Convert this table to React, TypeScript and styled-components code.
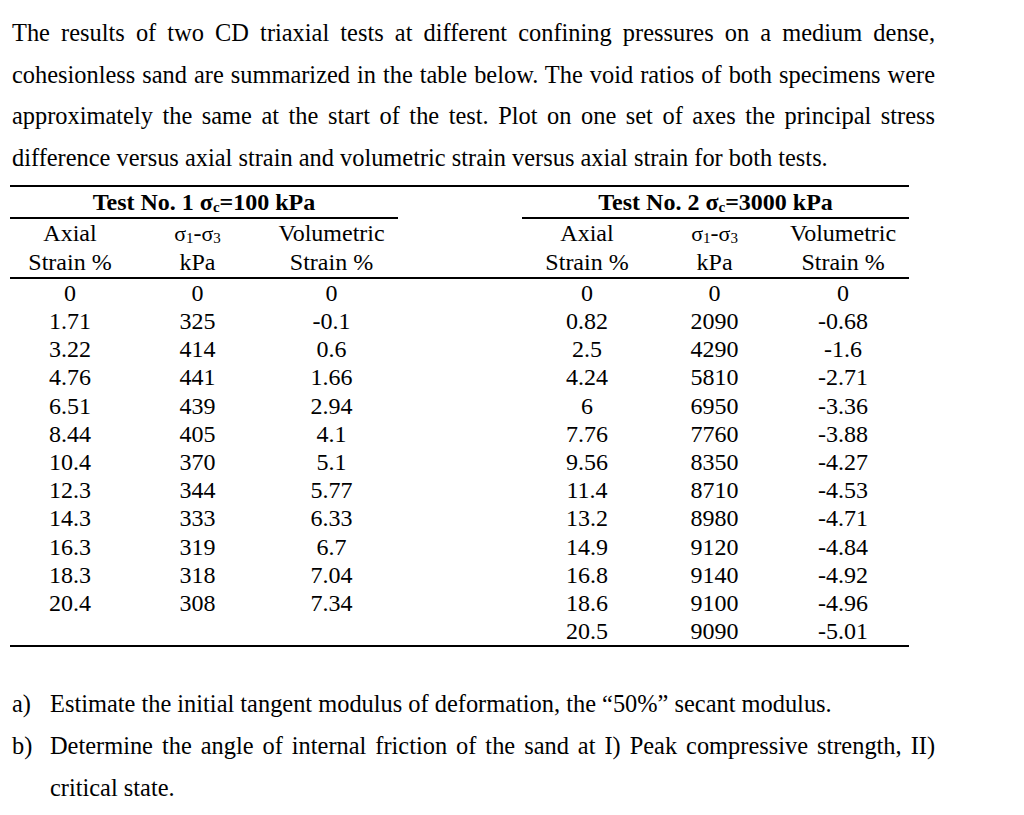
import React from "react";
import styled, { createGlobalStyle } from "styled-components";

const Global = createGlobalStyle`
  html, body { margin: 0; padding: 0; background: #fff; }
  body { font-family: "Liberation Serif", "Times New Roman", serif; color: #000; }
`;

const Page = styled.div`
  width: 1024px;
  height: 815px;
  box-sizing: border-box;
  padding: 12px 89px 0 12px;
  overflow: hidden;
`;

const Para = styled.p`
  margin: 0;
  font-size: 24.4px;
  line-height: 41.7px;
  text-align: justify;
`;

const Table = styled.table`
  border-collapse: collapse;
  table-layout: fixed;
  width: 899px;
  margin: 6px 0 0 -2px;
  font-size: 24px;
  border-top: 2px solid #000;
  border-bottom: 2px solid #000;
`;

const TitleCell = styled.th<{ $line?: boolean }>`
  font-weight: bold;
  text-align: center;
  height: 30px;
  padding: 0;
  line-height: 30px;
  border-bottom: ${(p) => (p.$line ? "2px solid #000" : "none")};
`;

const HeadRow = styled.tr`
  border-bottom: 2px solid #000;
`;

const HeadCell = styled.th`
  font-weight: normal;
  text-align: center;
  padding: 0;
  line-height: 29px;
`;

const Cell = styled.td`
  text-align: center;
  padding: 0;
  height: 28.2px;
  line-height: 28px;
`;

const Sig = styled.span`
  font-size: 22px;
`;

const Sub = styled.sub`
  font-size: 15px;
  vertical-align: -2px;
  line-height: 0;
`;

const List = styled.div`
  margin-top: 36px;
  font-size: 24.4px;
  line-height: 41.7px;
`;

const Item = styled.div`
  display: flex;
`;

const Label = styled.span`
  flex: 0 0 38px;
`;

const ItemText = styled.span`
  flex: 1;
  text-align: justify;
`;

const t1 = [
  ["0", "0", "0"],
  ["1.71", "325", "-0.1"],
  ["3.22", "414", "0.6"],
  ["4.76", "441", "1.66"],
  ["6.51", "439", "2.94"],
  ["8.44", "405", "4.1"],
  ["10.4", "370", "5.1"],
  ["12.3", "344", "5.77"],
  ["14.3", "333", "6.33"],
  ["16.3", "319", "6.7"],
  ["18.3", "318", "7.04"],
  ["20.4", "308", "7.34"],
];

const t2 = [
  ["0", "0", "0"],
  ["0.82", "2090", "-0.68"],
  ["2.5", "4290", "-1.6"],
  ["4.24", "5810", "-2.71"],
  ["6", "6950", "-3.36"],
  ["7.76", "7760", "-3.88"],
  ["9.56", "8350", "-4.27"],
  ["11.4", "8710", "-4.53"],
  ["13.2", "8980", "-4.71"],
  ["14.9", "9120", "-4.84"],
  ["16.8", "9140", "-4.92"],
  ["18.6", "9100", "-4.96"],
  ["20.5", "9090", "-5.01"],
];

const widths = [120, 135, 133, 124, 130, 125, 132];

const SigHead = () => (
  <>
    <Sig>σ</Sig>
    <Sub>1</Sub>-<Sig>σ</Sig>
    <Sub>3</Sub>
  </>
);

export default function App() {
  return (
    <>
      <Global />
      <Page>
        <Para>
          The results of two CD triaxial tests at different confining pressures on a medium dense,
          cohesionless sand are summarized in the table below. The void ratios of both specimens were
          approximately the same at the start of the test. Plot on one set of axes the principal stress
          difference versus axial strain and volumetric strain versus axial strain for both tests.
        </Para>
        <Table>
          <colgroup>
            {widths.map((w, i) => (
              <col key={i} style={{ width: w }} />
            ))}
          </colgroup>
          <thead>
            <tr>
              <TitleCell colSpan={3} $line>
                Test No. 1 σ<Sub>c</Sub>=100 kPa
              </TitleCell>
              <TitleCell />
              <TitleCell colSpan={3} $line>
                Test No. 2 σ<Sub>c</Sub>=3000 kPa
              </TitleCell>
            </tr>
            <HeadRow>
              <HeadCell>Axial<br />Strain %</HeadCell>
              <HeadCell><SigHead /><br />kPa</HeadCell>
              <HeadCell>Volumetric<br />Strain %</HeadCell>
              <HeadCell />
              <HeadCell>Axial<br />Strain %</HeadCell>
              <HeadCell><SigHead /><br />kPa</HeadCell>
              <HeadCell>Volumetric<br />Strain %</HeadCell>
            </HeadRow>
          </thead>
          <tbody>
            {t2.map((r, i) => {
              const l = t1[i];
              return (
                <tr key={i}>
                  <Cell>{l ? l[0] : ""}</Cell>
                  <Cell>{l ? l[1] : ""}</Cell>
                  <Cell>{l ? l[2] : ""}</Cell>
                  <Cell />
                  <Cell>{r[0]}</Cell>
                  <Cell>{r[1]}</Cell>
                  <Cell>{r[2]}</Cell>
                </tr>
              );
            })}
          </tbody>
        </Table>
        <List>
          <Item>
            <Label>a)</Label>
            <ItemText>Estimate the initial tangent modulus of deformation, the “50%” secant modulus.</ItemText>
          </Item>
          <Item>
            <Label>b)</Label>
            <ItemText>
              Determine the angle of internal friction of the sand at I) Peak compressive strength, II)
              critical state.
            </ItemText>
          </Item>
        </List>
      </Page>
    </>
  );
}
